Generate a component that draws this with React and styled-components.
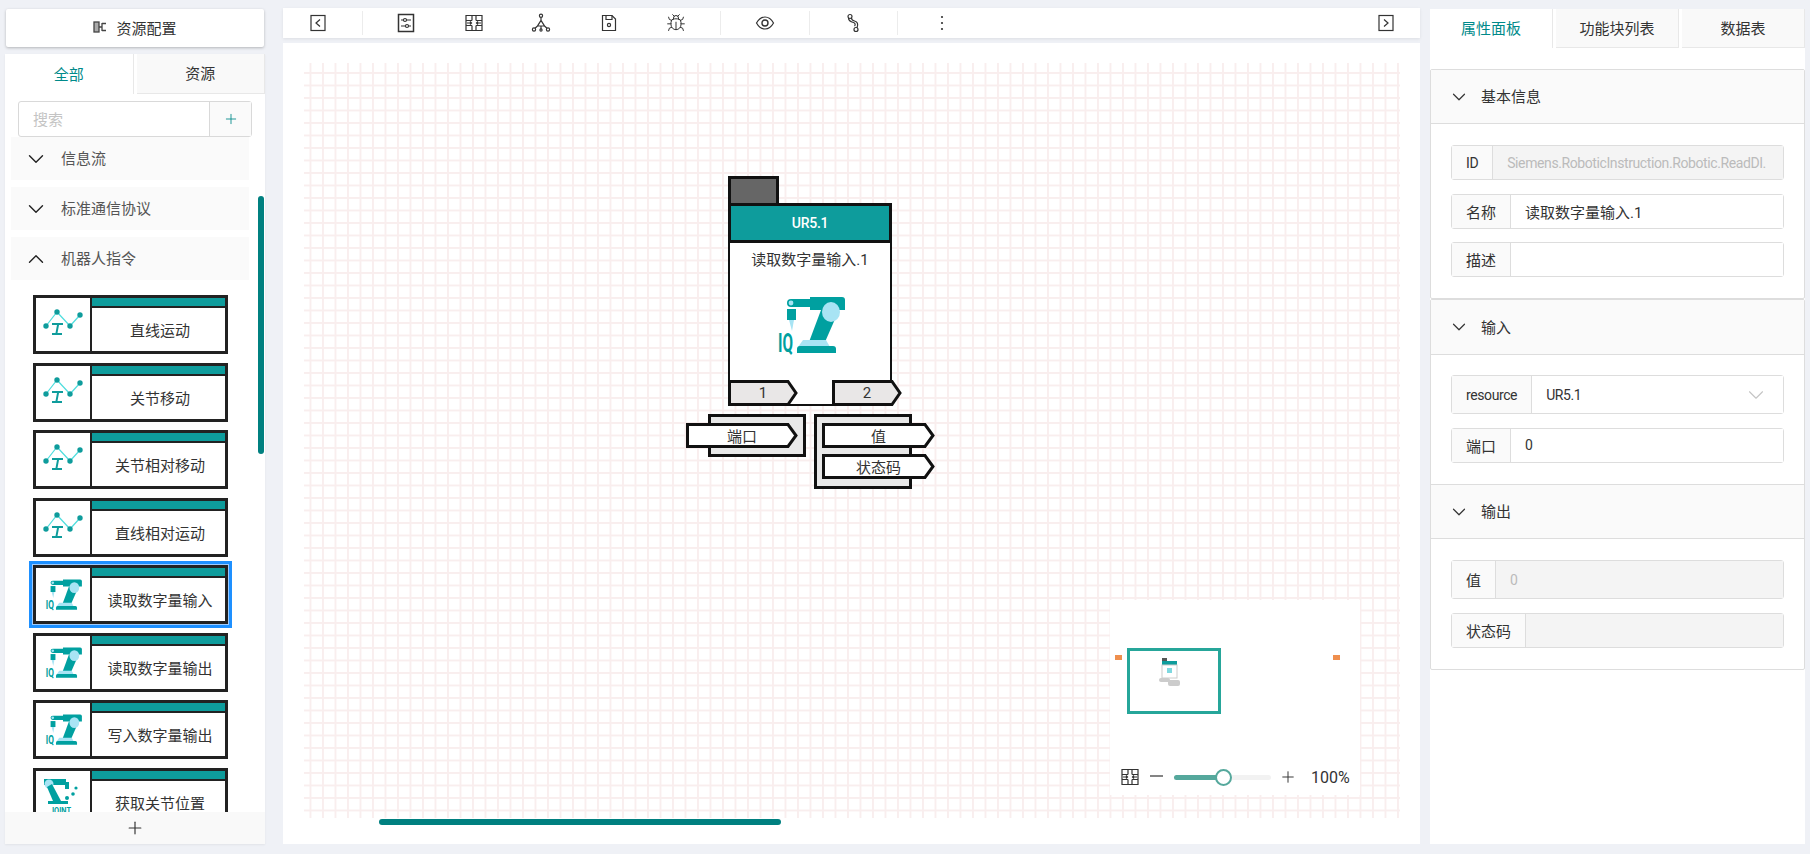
import React from "react";
import styled, { createGlobalStyle } from "styled-components";
import { Bug, ChevronDown, ChevronUp, Plus } from "lucide-react";

const TEAL = "#0e9c9c";
const FONT = `Roboto, "Noto Sans CJK SC", sans-serif`;

const Global = createGlobalStyle`
  html, body { margin: 0; height: 100%; overflow: hidden; }
  body { background: #eff1f6; font-family: ${FONT}; font-size: 15px; color: #333; }
  * { box-sizing: border-box; }
`;

const Page = styled.div`
  width: 1810px;
  height: 854px;
  display: flex;
  padding: 9px 5px 10px 5px;
`;

const Latin = styled.span`
  font-size: 14px;
  letter-spacing: -0.4px;
`;

const HeadTitle = styled.span`
  margin-top: -2px;
`;

/* ---------- left column ---------- */
const LeftCol = styled.div`
  width: 260px;
  display: flex;
  flex-direction: column;
  gap: 7px;
  margin-right: 18px;
`;
const ConfigButton = styled.div`
  height: 38px;
  margin: 0 1px;
  padding-bottom: 2px;
  background: #fff;
  border-radius: 2px;
  box-shadow: 0 1px 3px rgba(0, 0, 0, 0.25);
  display: flex;
  align-items: center;
  justify-content: center;
  gap: 9px;
`;
const LeftPanel = styled.div`
  flex: 1;
  min-height: 0;
  background: #fff;
  position: relative;
  display: flex;
  flex-direction: column;
  box-shadow: 0 1px 2px rgba(0, 0, 0, 0.06);
`;
const TabRow = styled.div`
  display: flex;
  height: ${(p) => p.$h}px;
  gap: 3px;
  flex: none;
`;
const Tab = styled.div`
  flex: 1;
  padding-bottom: 2px;
  display: flex;
  align-items: center;
  justify-content: center;
  color: ${(p) => (p.$active ? "#008a8a" : "#333")};
  background: ${(p) => (p.$active ? "#fff" : "#f9f9f9")};
  border-bottom: ${(p) => (p.$active ? "none" : "1px solid #e8e8e8")};
  border-right: 1px solid #e8e8e8;
`;
const SearchBox = styled.div`
  flex: none;
  display: flex;
  height: 36px;
  margin: 7px 13px 0 13px;
  border: 1px solid #d9d9d9;
  border-radius: 3px;
`;
const SearchInput = styled.div`
  flex: 1;
  padding: 0 0 2px 14px;
  display: flex;
  align-items: center;
  color: #c4c4c4;
`;
const SearchAdd = styled.div`
  width: 42px;
  border-left: 1px solid #d9d9d9;
  background: #fafafa;
  display: flex;
  align-items: center;
  justify-content: center;
  color: #008a8a;
`;
const LeftList = styled.div`
  flex: 1;
  min-height: 0;
  overflow: hidden;
  padding: 0 16px 0 6px;
  display: flex;
  flex-direction: column;
  gap: 7px;
`;
const GroupHead = styled.div`
  flex: none;
  height: 43px;
  background: #fafafa;
  display: flex;
  align-items: center;
  gap: 12px;
  padding-left: 12px;
  color: #555;
  svg { color: #222; }
`;
const Blocks = styled.div`
  flex: none;
  display: flex;
  flex-direction: column;
  gap: 8.5px;
  margin: 8px 0 0 22px;
`;
const Block = styled.div`
  width: 195px;
  height: 59px;
  flex: none;
  border: 3px solid #222;
  display: flex;
  background: #fff;
  box-shadow: ${(p) => (p.$selected ? "0 0 0 1px #9ccbff, 0 0 0 4px #1e90ff" : "none")};
`;
const BlockIcon = styled.div`
  width: 56px;
  flex: none;
  border-right: 2px solid #222;
  padding-bottom: 5px;
  display: flex;
  align-items: center;
  justify-content: center;
  overflow: hidden;
`;
const BlockMain = styled.div`
  flex: 1;
  display: flex;
  flex-direction: column;
`;
const BlockBar = styled.div`
  height: 10px;
  flex: none;
  background: ${TEAL};
  border-bottom: 2px solid #222;
`;
const BlockLabel = styled.div`
  flex: 1;
  padding-left: 3px;
  display: flex;
  align-items: center;
  justify-content: center;
  color: #333;
  font-size: 15px;
`;
const AddBar = styled.div`
  flex: none;
  height: 32px;
  background: #f9f9f9;
  display: flex;
  align-items: center;
  justify-content: center;
  color: #333;
  position: relative;
`;
const Thumb = styled.div`
  position: absolute;
  right: 1px;
  width: 6px;
  top: 142px;
  height: 258px;
  border-radius: 3px;
  background: #008080;
`;

/* ---------- centre ---------- */
const Centre = styled.div`
  width: 1137px;
  margin: -1px 10px 0 0;
  display: flex;
  flex-direction: column;
  gap: 5px;
`;
const Toolbar = styled.div`
  height: 30px;
  flex: none;
  background: #fff;
  display: flex;
  align-items: center;
  padding-left: 1px;
  box-shadow: 0 1px 3px rgba(0, 0, 0, 0.08);
`;
const ToolItem = styled.div`
  width: 67.5px;
  display: flex;
  justify-content: center;
  color: #333;
  ${(p) => p.$end && "margin-left: auto; width: 68px;"}
`;
const ToolSep = styled.div`
  width: 1px;
  height: 24px;
  margin: 0 10px;
  background: #ececec;
`;
const Canvas = styled.div`
  flex: 1;
  min-height: 0;
  background: #fff;
  padding: 20px 20px 26px 21px;
  display: flex;
  position: relative;
`;
const Grid = styled.div`
  flex: 1;
  position: relative;
  background-color: #fff;
  background-image: linear-gradient(to right, #f9eeee 2px, transparent 2px),
    linear-gradient(to bottom, #f9eeee 2px, transparent 2px);
  background-size: 12.5px 12.5px;
  background-position: 5.5px 9px;
`;
const HScroll = styled.div`
  position: absolute;
  left: 96px;
  bottom: 19px;
  width: 402px;
  height: 6px;
  border-radius: 3px;
  background: #008080;
`;

/* node */
const Node = styled.div`
  position: absolute;
  left: 424px;
  top: 113px;
  width: 164px;
  display: flex;
  flex-direction: column;
`;
const NodeTab = styled.div`
  width: 51px;
  height: 27px;
  background: #666;
  border: 3px solid #111;
  border-bottom: none;
`;
const NodeHead = styled.div`
  height: 40px;
  background: ${TEAL};
  border: 3px solid #111;
  color: #fff;
  font-weight: 500;
  font-size: 14px;
  letter-spacing: -0.3px;
  display: flex;
  align-items: center;
  justify-content: center;
`;
const NodeBody = styled.div`
  height: 163px;
  border: 2px solid #111;
  border-top: none;
  background: #fff;
  display: flex;
  flex-direction: column;
  align-items: center;
`;
const NodeTitle = styled.div`
  margin-top: 6px;
  height: 22px;
  line-height: 22px;
  color: #333;
`;
const NodeIcon = styled.div`
  margin-top: 9px;
  height: 80px;
`;
const PortRow = styled.div`
  margin: auto -12px -2px -2px;
  align-self: stretch;
  display: flex;
  justify-content: space-between;
`;
const IoRow = styled.div`
  display: flex;
  margin-top: 8px;
  margin-left: -20px;
  gap: 8px;
  align-items: flex-start;
`;
const IoBox = styled.div`
  width: 98px;
  height: ${(p) => p.$h}px;
  flex: none;
  background: #e8e8e8;
  border: 3px solid #111;
  padding: 6px 0 0 ${(p) => p.$pad}px;
  display: flex;
  flex-direction: column;
  gap: 6px;
`;
const PortWrap = styled.div`
  position: relative;
  width: ${(p) => p.$w}px;
  height: ${(p) => p.$h}px;
  margin-left: ${(p) => p.$shift}px;
  flex: none;
  display: flex;
  align-items: center;
  justify-content: center;
  color: #333;
`;
const PortShape = styled.svg`
  position: absolute;
  left: 0;
  top: 0;
`;
const PortText = styled.span`
  position: relative;
`;

/* minimap */
const MiniMap = styled.div`
  position: absolute;
  left: 806px;
  top: 537px;
  width: 250px;
  height: 195px;
  background: #fff;
  display: flex;
  flex-direction: column;
  justify-content: flex-end;
`;
const MiniView = styled.div`
  position: absolute;
  left: 17px;
  top: 48px;
  width: 94px;
  height: 66px;
  border: 3px solid #26a69a;
`;
const MiniMark = styled.div`
  position: absolute;
  left: ${(p) => p.$x}px;
  top: 55px;
  width: 7px;
  height: 5px;
  background: #ef8f4e;
`;
const MiniNode = styled.svg`
  position: absolute;
  left: 49px;
  top: 58px;
`;
const MiniBar = styled.div`
  height: 36px;
  display: flex;
  align-items: center;
  padding-left: 10px;
  color: #333;
`;
const MinusIcon = styled.svg`
  margin: 0 9px 0 7px;
`;
const Slider = styled.div`
  position: relative;
  width: 97px;
  height: 5px;
  margin-right: 8px;
  border-radius: 3px;
  background: #f2f2f2;
`;
const SliderFill = styled.div`
  height: 100%;
  border-radius: 3px;
  background: #55a89c;
`;
const SliderKnob = styled.div`
  position: absolute;
  top: -6px;
  width: 17px;
  height: 17px;
  border-radius: 50%;
  background: #fff;
  border: 2px solid #55a89c;
`;
const ZoomValue = styled.span`
  margin-left: 14px;
  font-size: 16px;
`;

/* ---------- right ---------- */
const RightPanel = styled.div`
  width: 375px;
  background: #fff;
  display: flex;
  flex-direction: column;
`;
const Section = styled.div`
  border: 1px solid #ddd;
  border-radius: 2px;
  ${(p) => p.$first && "margin-top: 21px;"}
`;
const SectionHead = styled.div`
  height: ${(p) => p.$h}px;
  background: #fafafa;
  border-bottom: 1px solid #ddd;
  ${(p) => p.$divided && "border-top: 1px solid #ddd;"}
  display: flex;
  align-items: center;
  gap: 11px;
  padding-left: 17px;
  svg { color: #333; }
`;
const SectionBody = styled.div`
  padding: ${(p) => p.$top}px 20px ${(p) => p.$bottom}px 20px;
  display: flex;
  flex-direction: column;
  gap: 13.5px;
`;
const Field = styled.div`
  display: flex;
  height: ${(p) => (p.$tall ? 39 : 35)}px;
  border: 1px solid #ddd;
  border-radius: 3px;
`;
const FieldLabel = styled.div`
  flex: none;
  padding: 0 14px;
  background: #fafafa;
  border-right: 1px solid #ddd;
  display: flex;
  align-items: center;
  color: #333;
`;
const FieldValue = styled.div`
  flex: 1;
  min-width: 0;
  padding: 0 14px;
  display: flex;
  align-items: center;
  justify-content: space-between;
  white-space: nowrap;
  overflow: hidden;
  background: ${(p) => (p.$disabled ? "#f4f4f4" : "#fff")};
  color: ${(p) => (p.$disabled ? "#bbb" : "#333")};
  svg { color: #c4c4c4; }
`;

const Robot = ({ width = 100, height = 80 }) => (
  <svg width={width} height={height} viewBox="0 0 100 80">
    <path d="M50 17h32a3 3 0 0 1 3 3v10H50z" fill="#00a0a0" />
    <path d="M31 19h19v8H31a4 4 0 0 1 0-8z" fill="#00a0a0" />
    <circle cx="31" cy="23" r="2.4" fill="#a8e4f4" />
    <rect x="27" y="29" width="9" height="11" fill="#00a0a0" />
    <path d="M29 40h5l-2 11z" fill="#a8e4f4" />
    <path d="M61 30h18L65 62H49z" fill="#00a0a0" />
    <ellipse cx="71" cy="32" rx="9" ry="10" fill="#a8e4f4" />
    <path d="M43 60h23l4 7H38z" fill="#a8e4f4" />
    <path d="M40 66h33a3 3 0 0 1 3 3v4H37v-4a3 3 0 0 1 3-3z" fill="#00a0a0" />
    <text x="18" y="72" fontFamily="Roboto, sans-serif" fontWeight="700" fontSize="25" fill="#00a0a0" textLength="15" lengthAdjust="spacingAndGlyphs">
      IQ
    </text>
  </svg>
);

const JointIcon = () => (
  <svg width="46" height="44" viewBox="0 0 46 44">
    <path d="M4 6h22v6H4z" fill="#00a0a0" />
    <circle cx="9" cy="11" r="4.5" fill="#a8e4f4" />
    <path d="M7 14l5-3 9 17h-8z" fill="#00a0a0" />
    <rect x="25" y="9" width="4" height="7" fill="#00a0a0" />
    <circle cx="36" cy="15" r="1.6" fill="#00a0a0" />
    <circle cx="33" cy="21" r="1.8" fill="#00a0a0" />
    <circle cx="27" cy="25" r="2" fill="#00a0a0" />
    <rect x="8" y="28" width="20" height="3" fill="#00a0a0" />
    <text x="10" y="41" fontFamily="Roboto, sans-serif" fontWeight="700" fontSize="9" fill="#00a0a0" textLength="21" lengthAdjust="spacingAndGlyphs">
      JOINT
    </text>
  </svg>
);

const MotionIcon = () => (
  <svg width="46" height="36" viewBox="0 0 46 36">
    <path d="M6 22L17 8l13 14L40 11" fill="none" stroke="#4fdede" strokeWidth="1.2" />
    <circle cx="6" cy="22" r="2.7" fill="#0e9c9c" />
    <circle cx="17" cy="8" r="2.7" fill="#0e9c9c" />
    <circle cx="30" cy="22" r="2.7" fill="#0e9c9c" />
    <circle cx="40" cy="11" r="2.7" fill="#0e9c9c" />
    <path d="M12 19h11v2h-4l-1.5 8H22v2H12v-2h3.5l1.5-8h-5z" fill="#0e9c9c" />
  </svg>
);

const ToolIcon = ({ children }) => (
  <svg width="20" height="20" viewBox="0 0 20 20" fill="none" stroke="currentColor" strokeWidth="1.2">
    {children}
  </svg>
);

const FitGlyph = () => (
  <>
    <path d="M2 2.5h16v15H2z" />
    <path d="M8 2.5v5M12 2.5v5M8 12.5v5M12 12.5v5M2 7.5h6M12 7.5h6M2 12.5h6M12 12.5h6" />
    <path d="M3 10h4.5M6 8.5L7.5 10 6 11.5M17 10h-4.5M14 8.5L12.5 10l1.5 1.5" />
  </>
);

const Port = ({ w, h = 25, shift = 0, fill = "#fff", children }) => (
  <PortWrap $w={w} $h={h} $shift={shift}>
    <PortShape width={w} height={h}>
      <polygon
        points={`1.5,1.5 ${w - 10},1.5 ${w - 2},${h / 2} ${w - 10},${h - 1.5} 1.5,${h - 1.5}`}
        fill={fill}
        stroke="#111"
        strokeWidth="3"
      />
    </PortShape>
    <PortText>{children}</PortText>
  </PortWrap>
);

const blocks = [
  { label: "直线运动", icon: "motion" },
  { label: "关节移动", icon: "motion" },
  { label: "关节相对移动", icon: "motion" },
  { label: "直线相对运动", icon: "motion" },
  { label: "读取数字量输入", icon: "robot", selected: true },
  { label: "读取数字量输出", icon: "robot" },
  { label: "写入数字量输出", icon: "robot" },
  { label: "获取关节位置", icon: "joint" },
];

const App = () => {
  return (
    <>
      <Global />
      <Page>
        <LeftCol>
          <ConfigButton>
            <svg width="14" height="14" viewBox="0 0 14 14" fill="none" stroke="#444" strokeWidth="1.3">
              <rect x="1" y="2" width="5" height="10" fill="#aaa" />
              <path d="M6 7h3M9 3.5h4M9 10.5h4M9 3v8" />
            </svg>
            资源配置
          </ConfigButton>
          <LeftPanel>
            <TabRow $h={40}>
              <Tab $active>全部</Tab>
              <Tab>资源</Tab>
            </TabRow>
            <SearchBox>
              <SearchInput>搜索</SearchInput>
              <SearchAdd>
                <Plus size={16} strokeWidth={1.3} />
              </SearchAdd>
            </SearchBox>
            <LeftList>
              <GroupHead>
                <ChevronDown size={26} strokeWidth={1.3} />
                <HeadTitle>信息流</HeadTitle>
              </GroupHead>
              <GroupHead>
                <ChevronDown size={26} strokeWidth={1.3} />
                <HeadTitle>标准通信协议</HeadTitle>
              </GroupHead>
              <GroupHead>
                <ChevronUp size={26} strokeWidth={1.3} />
                <HeadTitle>机器人指令</HeadTitle>
              </GroupHead>
              <Blocks>
                {blocks.map((b) => (
                  <Block key={b.label} $selected={b.selected}>
                    <BlockIcon>
                      {b.icon === "motion" && <MotionIcon />}
                      {b.icon === "robot" && <Robot width={55} height={44} />}
                      {b.icon === "joint" && <JointIcon />}
                    </BlockIcon>
                    <BlockMain>
                      <BlockBar />
                      <BlockLabel>{b.label}</BlockLabel>
                    </BlockMain>
                  </Block>
                ))}
              </Blocks>
            </LeftList>
            <AddBar>
              <Plus size={20} strokeWidth={1.4} />
            </AddBar>
            <Thumb />
          </LeftPanel>
        </LeftCol>

        <Centre>
          <Toolbar>
            <ToolItem>
              <ToolIcon>
                <rect x="3" y="2.5" width="14" height="15" />
                <path d="M12 6.5L8 10l4 3.5" />
              </ToolIcon>
            </ToolItem>
            <ToolSep />
            <ToolItem>
              <ToolIcon>
                <rect x="2.5" y="1.5" width="15" height="17" strokeWidth="1.5" />
                <path d="M5 7h10M5 13h10" />
                <circle cx="9" cy="7" r="1.5" fill="#fff" />
                <circle cx="11" cy="13" r="1.5" fill="#fff" />
              </ToolIcon>
            </ToolItem>
            <ToolItem>
              <ToolIcon>
                <FitGlyph />
              </ToolIcon>
            </ToolItem>
            <ToolItem>
              <ToolIcon>
                <circle cx="10" cy="2.8" r="1.6" />
                <circle cx="3" cy="16.5" r="1.6" />
                <circle cx="10" cy="17" r="1.1" />
                <circle cx="17" cy="16.5" r="1.6" />
                <path d="M10 4.4v3M10 7.4l3.5 5.6h-7zM6.5 13L4 15.3M13.5 13L16 15.3M10 13v3" />
              </ToolIcon>
            </ToolItem>
            <ToolItem>
              <ToolIcon>
                <path d="M3.5 2.5H13L16.5 6v11.5h-13z" />
                <path d="M7 2.5v4h6v-4" />
                <circle cx="10" cy="12" r="1.6" />
              </ToolIcon>
            </ToolItem>
            <ToolItem>
              <Bug size={20} strokeWidth={1.2} />
            </ToolItem>
            <ToolSep />
            <ToolItem>
              <ToolIcon>
                <path d="M1.5 10C4 5.5 7 4 10 4s6 1.5 8.5 6C16 14.5 13 16 10 16s-6-1.5-8.5-6z" />
                <circle cx="10" cy="10" r="3" strokeWidth="1.4" />
              </ToolIcon>
            </ToolItem>
            <ToolSep />
            <ToolItem>
              <ToolIcon>
                <circle cx="7" cy="3.5" r="2" />
                <circle cx="13" cy="16.5" r="2" />
                <path d="M5.5 5c0 3 3 4 5 4.5 2 .5 2 2.5 1 3.5" />
                <path d="M8.5 5c0 1.5 1 2.5 3 3 3 .7 4 3 2.5 6.8" />
              </ToolIcon>
            </ToolItem>
            <ToolSep />
            <ToolItem>
              <svg width="20" height="20" viewBox="0 0 20 20" fill="#333">
                <circle cx="10" cy="4" r="1.1" />
                <circle cx="10" cy="10" r="1.1" />
                <circle cx="10" cy="16" r="1.1" />
              </svg>
            </ToolItem>
            <ToolItem $end>
              <ToolIcon>
                <rect x="3" y="2.5" width="14" height="15" />
                <path d="M8 6.5l4 3.5-4 3.5" />
              </ToolIcon>
            </ToolItem>
          </Toolbar>
          <Canvas>
            <Grid>
              <Node>
                <NodeTab />
                <NodeHead>UR5.1</NodeHead>
                <NodeBody>
                  <NodeTitle>读取数字量输入.1</NodeTitle>
                  <NodeIcon>
                    <Robot />
                  </NodeIcon>
                  <PortRow>
                    <Port w={70} h={26} fill="#e9e7e7">1</Port>
                    <Port w={70} h={26} fill="#e9e7e7">2</Port>
                  </PortRow>
                </NodeBody>
                <IoRow>
                  <IoBox $h={43} $pad={0}>
                    <Port w={112} shift={-25}>端口</Port>
                  </IoBox>
                  <IoBox $h={75} $pad={5}>
                    <Port w={113}>值</Port>
                    <Port w={113}>状态码</Port>
                  </IoBox>
                </IoRow>
              </Node>
              <MiniMap>
                <MiniMark $x={5} />
                <MiniMark $x={223} />
                <MiniView />
                <MiniNode width="21" height="28" viewBox="0 0 21 28">
                  <rect x="3" y="0" width="5" height="4" fill="#555" />
                  <rect x="3" y="3" width="15" height="4" fill={TEAL} />
                  <rect x="3" y="7" width="15" height="13" fill="#fff" stroke="#ccc" />
                  <rect x="8" y="10" width="5" height="5" fill="#7fd8e0" />
                  <rect x="0" y="20" width="11" height="4" rx="2" fill="#ccc" />
                  <rect x="9" y="22" width="12" height="6" rx="2" fill="#ccc" />
                </MiniNode>
                <MiniBar>
                  <ToolIcon>
                    <FitGlyph />
                  </ToolIcon>
                  <MinusIcon width="18" height="18" viewBox="0 0 18 18" stroke="#333" strokeWidth="1.2">
                    <path d="M3 8h13" />
                  </MinusIcon>
                  <Slider>
                    <SliderFill style={{ width: "50%" }} />
                    <SliderKnob style={{ left: 40.5 }} />
                  </Slider>
                  <Plus size={18} strokeWidth={1.3} />
                  <ZoomValue>100%</ZoomValue>
                </MiniBar>
              </MiniMap>
            </Grid>
            <HScroll />
          </Canvas>
        </Centre>

        <RightPanel>
          <TabRow $h={39}>
            <Tab $active>属性面板</Tab>
            <Tab>功能块列表</Tab>
            <Tab>数据表</Tab>
          </TabRow>
          <Section $first>
            <SectionHead $h={54}>
              <ChevronDown size={22} strokeWidth={1.3} />
              <HeadTitle>基本信息</HeadTitle>
            </SectionHead>
            <SectionBody $top={21} $bottom={21}>
              <Field>
                <FieldLabel><Latin>ID</Latin></FieldLabel>
                <FieldValue $disabled><Latin>Siemens.RoboticInstruction.Robotic.ReadDI.</Latin></FieldValue>
              </Field>
              <Field>
                <FieldLabel>名称</FieldLabel>
                <FieldValue>读取数字量输入.1</FieldValue>
              </Field>
              <Field>
                <FieldLabel>描述</FieldLabel>
                <FieldValue />
              </Field>
            </SectionBody>
          </Section>
          <Section>
            <SectionHead $h={55}>
              <ChevronDown size={22} strokeWidth={1.3} />
              <HeadTitle>输入</HeadTitle>
            </SectionHead>
            <SectionBody $top={20} $bottom={21.5}>
              <Field $tall>
                <FieldLabel><Latin>resource</Latin></FieldLabel>
                <FieldValue>
                  <Latin>UR5.1</Latin>
                  <ChevronDown size={26} strokeWidth={1} />
                </FieldValue>
              </Field>
              <Field>
                <FieldLabel>端口</FieldLabel>
                <FieldValue><Latin>0</Latin></FieldValue>
              </Field>
            </SectionBody>
            <SectionHead $h={55} $divided>
              <ChevronDown size={22} strokeWidth={1.3} />
              <HeadTitle>输出</HeadTitle>
            </SectionHead>
            <SectionBody $top={21} $bottom={21}>
              <Field $tall>
                <FieldLabel>值</FieldLabel>
                <FieldValue $disabled><Latin>0</Latin></FieldValue>
              </Field>
              <Field>
                <FieldLabel>状态码</FieldLabel>
                <FieldValue $disabled />
              </Field>
            </SectionBody>
          </Section>
        </RightPanel>
      </Page>
    </>
  );
};

export default App;
